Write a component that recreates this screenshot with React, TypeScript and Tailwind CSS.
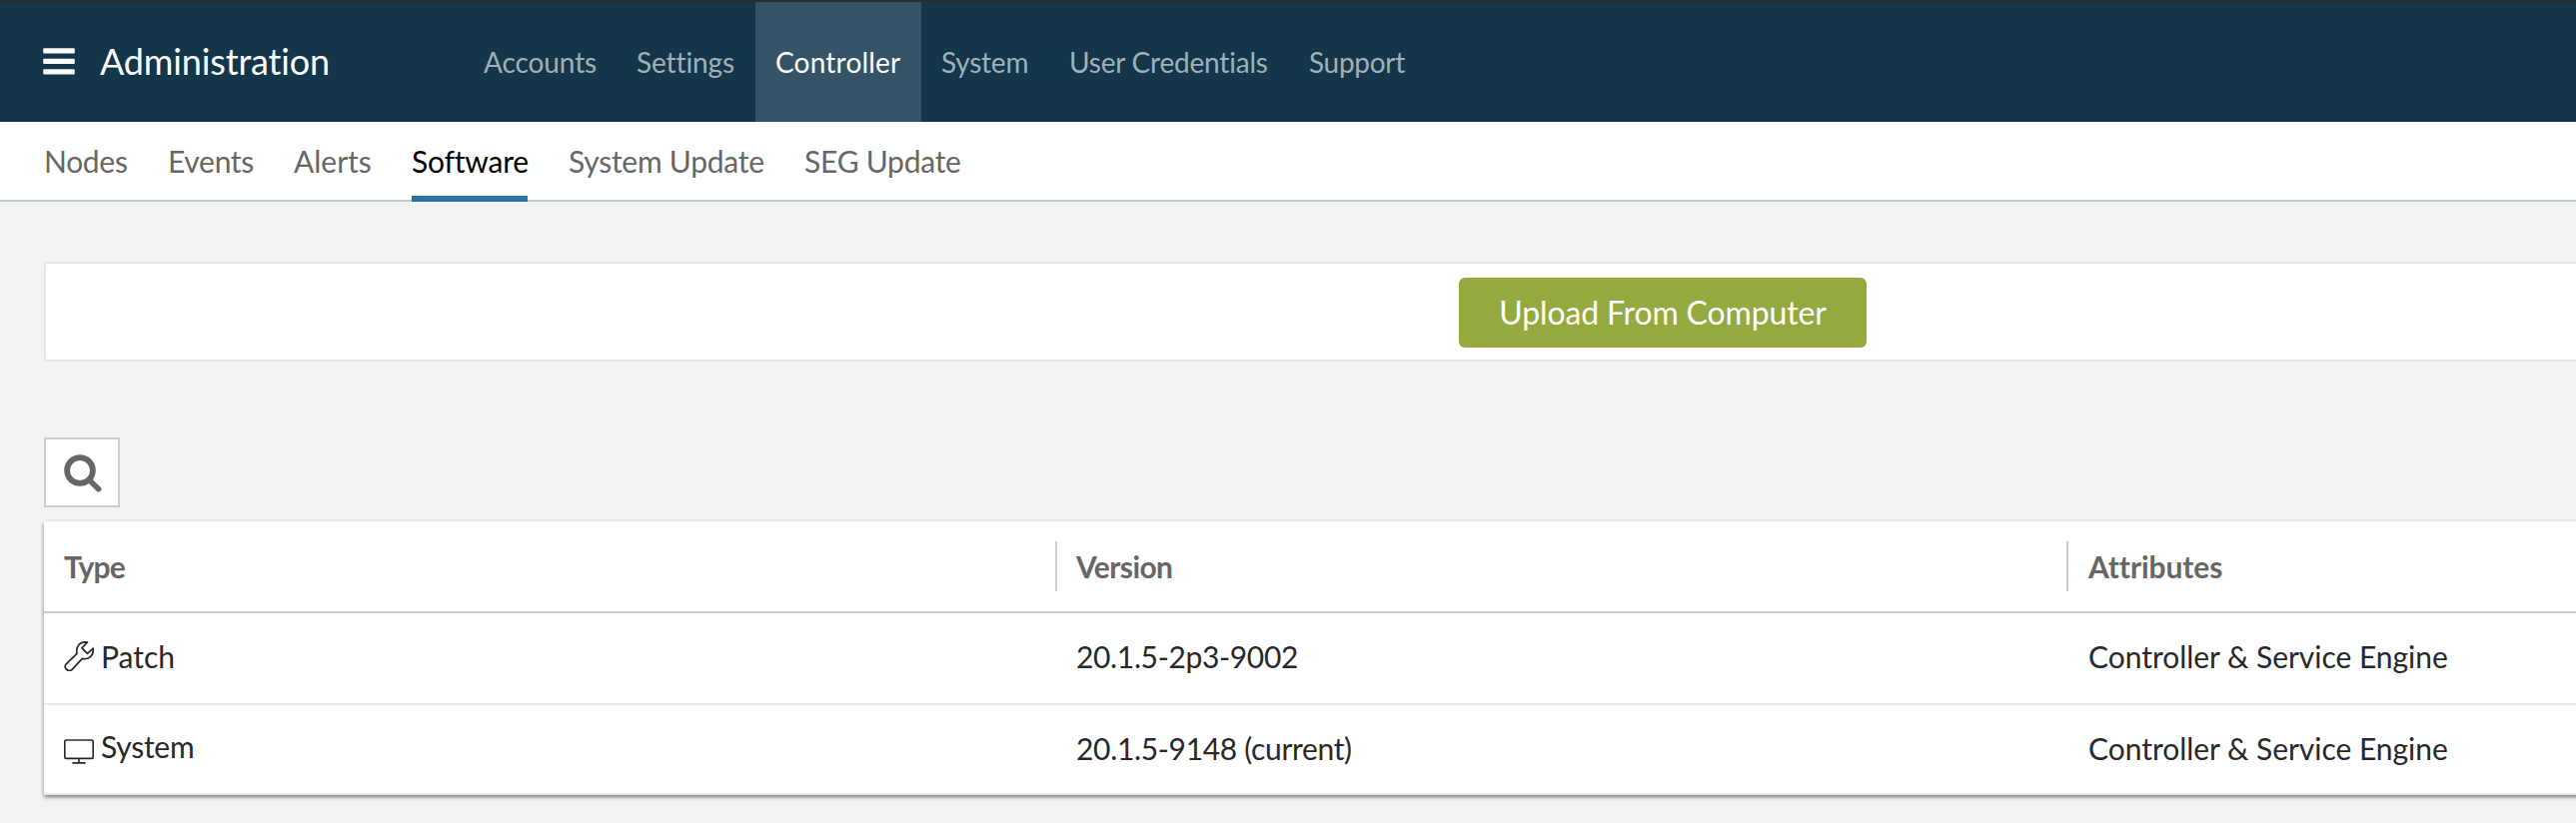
import React from "react";

const sections = [
  { label: "Accounts", className: "w-[153px] tracking-[-0.1px]" },
  { label: "Settings", className: "w-[139px] tracking-[-0.1px]" },
  { label: "Controller", className: "w-[166px] tracking-[0.2px] bg-[#355367] text-white" },
  { label: "System", className: "w-[128px] tracking-[-0.22px]" },
  { label: "User Credentials", className: "w-[240px] tracking-[-0.2px]" },
  { label: "Support", className: "w-[138px] tracking-[-0.3px]" },
];

const tabs = [
  { label: "Nodes", className: "w-[84px] tracking-[-0.3px]" },
  { label: "Events", className: "w-[86px] tracking-[-0.3px]" },
  { label: "Alerts", className: "w-[78px]" },
  { label: "Software", className: "w-[116px] tracking-[-0.2px]", active: true },
  { label: "System Update", className: "w-[197px] pl-px tracking-[-0.25px]" },
  { label: "SEG Update", className: "w-[160px] tracking-[-0.25px]" },
];

function MenuIcon() {
  return (
    <svg width="32" height="27" viewBox="0 0 32 27" fill="#fafafa">
      <rect x="0.2" y="0.2" width="31.6" height="5.4" rx="1" />
      <rect x="0.2" y="10.7" width="31.6" height="5.4" rx="1" />
      <rect x="0.2" y="21.2" width="31.6" height="5.4" rx="1" />
    </svg>
  );
}

function SearchIcon() {
  return (
    <svg width="38" height="38" viewBox="0 0 38 38" fill="none" stroke="#666666" strokeLinecap="round">
      <circle cx="16" cy="16" r="12.9" strokeWidth="5.8" />
      <path d="M26 26.2 34.7 34.7" strokeWidth="5.4" />
    </svg>
  );
}

function WrenchIcon() {
  return (
    <svg width="30" height="30" viewBox="0 0 30 30" fill="none" stroke="#27282a" strokeWidth="1.7" strokeLinejoin="round">
      <path d="M23.5 1C16 .2 11.6 4.6 13 12.3L2.2 22.8a4.1 4.1 0 0 0 5.7 5.8L18.3 17.4C24.5 19 30.2 14.6 29.2 7.2L23.5 12.3 18 6.8Z" />
    </svg>
  );
}

function MonitorIcon() {
  return (
    <svg width="30" height="26" viewBox="0 0 30 26" fill="none" stroke="#27282a" strokeWidth="1.6">
      <rect x="0.8" y="1" width="28.4" height="18.4" rx="1.2" />
      <path d="M15 19.5V24" />
      <path d="M9 23.9H21" strokeLinecap="round" />
    </svg>
  );
}

export default function App() {
  return (
    <div className="h-[824px] w-full overflow-hidden bg-[#f3f3f3] font-[Lato,sans-serif] whitespace-nowrap [font-variant-ligatures:none]">
      <header className="flex h-[122px] border-t-2 border-[#2b2b2b] bg-[#13364b]">
        <div className="flex w-[420px] items-center pb-[2px] pl-[43px] text-[36px] tracking-[-0.15px] text-white">
          <div className="mt-px">
            <MenuIcon />
          </div>
          <h1 className="ml-[25px]">Administration</h1>
        </div>
        <nav className="ml-11 flex text-[28px] text-[#a1afb7]">
          {sections.map((s) => (
            <a key={s.label} className={`flex items-center pl-5 ${s.className}`}>
              {s.label}
            </a>
          ))}
        </nav>
      </header>

      <nav className="flex h-20 gap-10 border-b-2 border-[#bdcbcc] bg-white pl-11 text-[30px] text-[#666666]">
        {tabs.map((t) => (
          <a
            key={t.label}
            className={`flex h-20 items-center border-b-[6px] pt-1 ${t.className} ${
              t.active ? "border-[#2c72a0] text-black" : "border-transparent"
            }`}
          >
            {t.label}
          </a>
        ))}
      </nav>

      <main className="w-[3284px] pt-[60px] pl-11">
        <div className="flex h-[100px] items-center justify-center rounded-[4px] border-2 border-[#e3e7ea] bg-white">
          <button className="mt-[2px] flex h-[70px] w-[408px] items-center justify-center rounded-[6px] bg-[#95aa3e] pb-px text-[32px] tracking-[-0.15px] text-white">
            Upload From Computer
          </button>
        </div>

        <button className="mt-[76px] flex h-[70px] w-[76px] items-center justify-center border-2 border-[#cccccc] bg-white pt-px pl-px">
          <SearchIcon />
        </button>

        <section className="mt-[14px] bg-white text-[30px] text-[#27282a] shadow-[0_2px_4px_rgba(0,0,0,0.5)]">
          <div className="grid h-[92px] grid-cols-[1012px_1012px_1216px] items-center border-b-2 border-[#cccccc] font-bold text-[#666666]">
            <div className="pl-5 tracking-[-0.9px]">Type</div>
            <div className="flex h-[50px] items-center border-l-2 border-[#cccccc] pl-[19px] tracking-[-0.6px]">Version</div>
            <div className="flex h-[50px] items-center border-l-2 border-[#cccccc] pl-5 tracking-[-0.1px]">Attributes</div>
          </div>
          <div className="grid h-[92px] grid-cols-[1012px_1012px_1216px] items-center border-b-2 border-[#e8e8e8] pb-1">
            <div className="flex items-center pl-5">
              <WrenchIcon />
              <span className="ml-[7px]">Patch</span>
            </div>
            <div className="pl-[21px] tracking-[-0.35px]">20.1.5-2p3-9002</div>
            <div className="pl-[22px] tracking-[-0.03px]">Controller &amp; Service Engine</div>
          </div>
          <div className="grid h-[90px] grid-cols-[1012px_1012px_1216px] items-center border-b-2 border-[#e8e8e8] pb-px">
            <div className="flex items-center pl-5 tracking-[-0.25px]">
              <div className="pt-[7px]">
                <MonitorIcon />
              </div>
              <span className="mb-[5px] ml-[7px]">System</span>
            </div>
            <div className="pl-[21px] tracking-[-0.33px]">20.1.5-9148 (current)</div>
            <div className="pl-[22px] tracking-[-0.03px]">Controller &amp; Service Engine</div>
          </div>
        </section>
      </main>
    </div>
  );
}
